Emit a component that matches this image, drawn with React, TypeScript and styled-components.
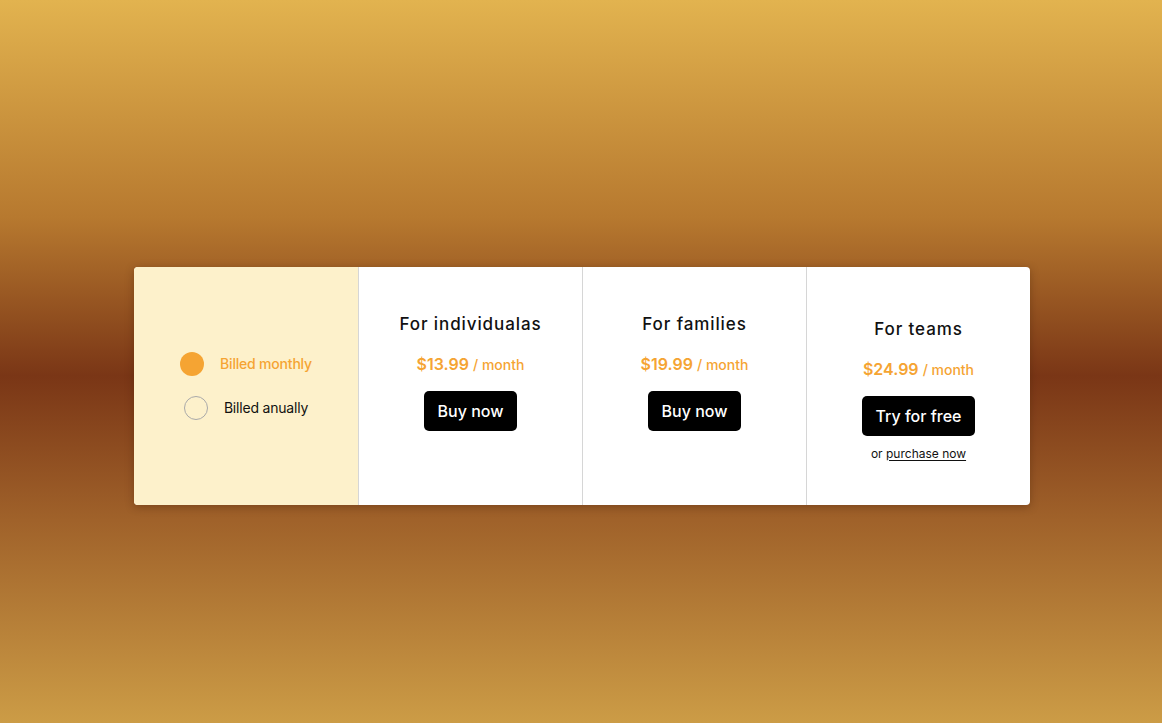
import styled, { createGlobalStyle } from "styled-components";

const GlobalStyle = createGlobalStyle`
    html, body {
        margin: 0;
        padding: 0;
        height: 100%;
    }
    body {
        font-family: Inter, "Noto Sans", sans-serif;
        -webkit-font-smoothing: antialiased;
    }
`;

const orange = "#f5a433";

const Page = styled.div`
    box-sizing: border-box;
    width: 100%;
    min-height: 723px;
    padding: 48px 0 0 2px;
    display: flex;
    align-items: center;
    justify-content: center;
    background: linear-gradient(180deg, #e2b34f 0%, #b7792f 30%, #7a3616 52%, #a0622a 72%, #cc9c46 100%);
`;

const Card = styled.div`
    display: grid;
    grid-template-columns: repeat(4, 224px);
    height: 238px;
    background: #fff;
    border-radius: 4px;
    overflow: hidden;
    box-shadow: 0 2px 8px rgba(60, 25, 5, 0.35);
`;

const Options = styled.div`
    background: #fdf1cb;
    display: flex;
    flex-direction: column;
    align-items: center;
    justify-content: center;
    gap: 20px;
`;

const Option = styled.label<{ $active?: boolean }>`
    display: flex;
    align-items: center;
    gap: 16px;
    font-size: 14px;
    letter-spacing: -0.2px;
    font-weight: ${p => (p.$active ? 500 : 400)};
    color: ${p => (p.$active ? orange : "#111")};
`;

const Radio = styled.span<{ $active?: boolean }>`
    width: 24px;
    height: 24px;
    box-sizing: border-box;
    border-radius: 50%;
    background: ${p => (p.$active ? orange : "transparent")};
    border: ${p => (p.$active ? "none" : "1px solid #a9a9a9")};
`;

const Plan = styled.div`
    display: flex;
    flex-direction: column;
    align-items: center;
    justify-content: center;
    padding-top: 7px;
    border-left: 1px solid #d6d6d6;
`;

const Title = styled.h2`
    margin: 0 0 19px;
    font-size: 17px;
    font-weight: 500;
    letter-spacing: 0.9px;
    line-height: 22px;
    color: #111;
`;

const Price = styled.div`
    font-size: 16px;
    font-weight: 600;
    color: ${orange};
    line-height: 20px;
    margin-bottom: 16px;

    span {
        font-size: 14px;
        font-weight: 500;
    }
`;

const Button = styled.button`
    height: 40px;
    padding: 0 14px;
    border: none;
    border-radius: 5px;
    background: #000;
    color: #fff;
    font-family: Inter, "Noto Sans", sans-serif;
    font-size: 16px;
    font-weight: 500;
    cursor: pointer;
`;

const Note = styled.div<{ $empty?: boolean }>`
    margin-top: ${p => (p.$empty ? "35px" : "10px")};
    height: ${p => (p.$empty ? "0" : "15px")};
    font-size: 12px;
    line-height: 15px;
    color: #111;

    a {
        color: #111;
        text-decoration: underline;
        text-underline-offset: 2px;
    }
`;

const plans = [
    { title: "For individualas", price: "$13.99", action: "Buy now" },
    { title: "For families", price: "$19.99", action: "Buy now" },
    { title: "For teams", price: "$24.99", action: "Try for free", trial: true },
];

export default function App() {
    return <>
        <GlobalStyle />
        <Page>
            <Card>
                <Options>
                    <Option $active><Radio $active />Billed monthly</Option>
                    <Option><Radio />Billed anually</Option>
                </Options>
                {plans.map(p => (
                    <Plan key={p.title}>
                        <Title>{p.title}</Title>
                        <Price>{p.price} <span>/ month</span></Price>
                        <Button>{p.action}</Button>
                        {p.trial ? <Note>or <a href="#">purchase now</a></Note> : <Note $empty />}
                    </Plan>
                ))}
            </Card>
        </Page>
    </>;
}
